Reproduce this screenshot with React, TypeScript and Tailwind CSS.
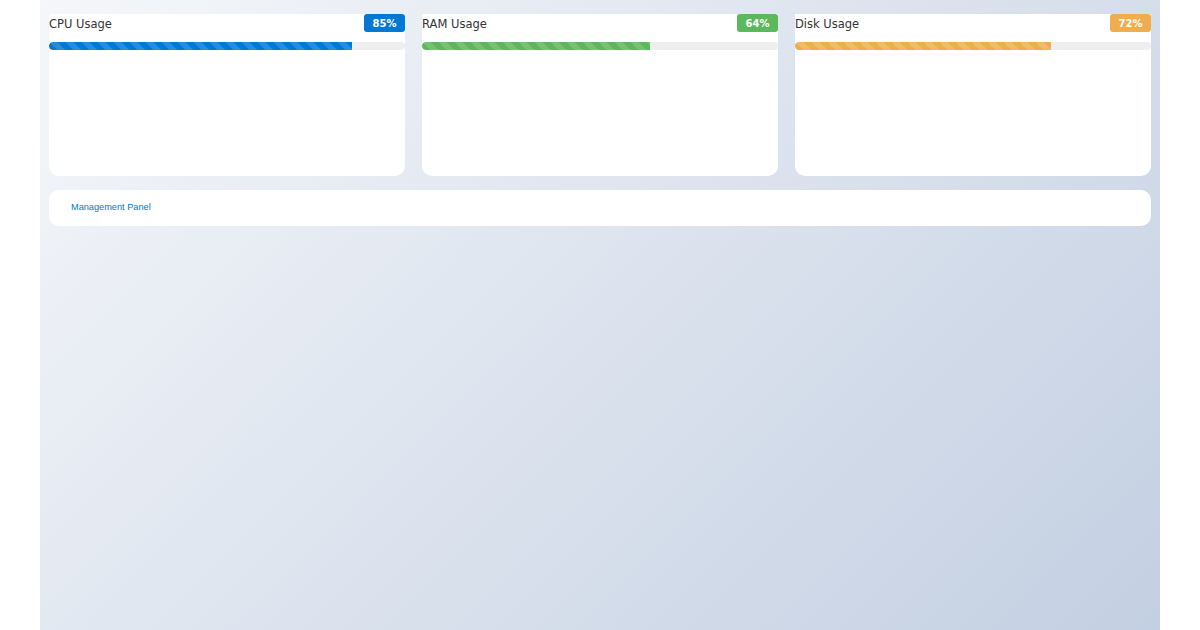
import React from "react";

const stripes =
  "bg-[linear-gradient(45deg,rgba(255,255,255,0.15)_25%,transparent_25%,transparent_50%,rgba(255,255,255,0.15)_50%,rgba(255,255,255,0.15)_75%,transparent_75%,transparent)] bg-[length:16px_16px]";

type Item = { label: string; value: number; badge: string; fill: string };

const items: Item[] = [
  { label: "CPU Usage", value: 85, badge: "bg-[#0078d4]", fill: "bg-[#0078d4]" },
  { label: "RAM Usage", value: 64, badge: "bg-[#5cb85c]", fill: "bg-[#5cb85c]" },
  { label: "Disk Usage", value: 72, badge: "bg-[#f0ad4e]", fill: "bg-[#f0ad4e]" },
];

function Card({ item }: { item: Item }) {
  return (
    <div className="flex h-[162px] flex-col rounded-b-[10px] bg-white">
      <div className="flex h-[18px] items-start justify-between">
        <span className="pt-[1px] text-[11.5px] leading-[18px] text-[#333]" style={{ fontFamily: '"DejaVu Sans", sans-serif' }}>
          {item.label}
        </span>
        <span
          className={`${item.badge} flex h-[18px] w-[41px] items-center justify-center rounded-[3px] text-[10px] font-bold text-white`}
          style={{ fontFamily: '"DejaVu Sans", sans-serif' }}
        >
          {item.value}%
        </span>
      </div>
      <div className="mt-[10px] h-[8px] w-full overflow-hidden rounded-full bg-[#eeeeee]">
        <div className={`h-full rounded-l-full ${item.fill} ${stripes}`} style={{ width: `${item.value}%` }} />
      </div>
    </div>
  );
}

export default function App() {
  return (
    <div className="flex min-h-[630px] w-full justify-center bg-white">
      <div className="min-h-[630px] w-[1120px] bg-[linear-gradient(135deg,#f5f7fa_0%,#c3cfe2_100%)] px-[9px] pt-[14px]">
        <div className="grid grid-cols-3 gap-[17px]">
          {items.map((it) => (
            <Card key={it.label} item={it} />
          ))}
        </div>
        <div className="mt-[14px] flex h-[36px] items-center rounded-[10px] bg-white px-[22px]">
          <span className="text-[9.2px] text-[#0078d4]" style={{ fontFamily: '"Liberation Sans", Arial, sans-serif' }}>
            Management Panel
          </span>
        </div>
      </div>
    </div>
  );
}
